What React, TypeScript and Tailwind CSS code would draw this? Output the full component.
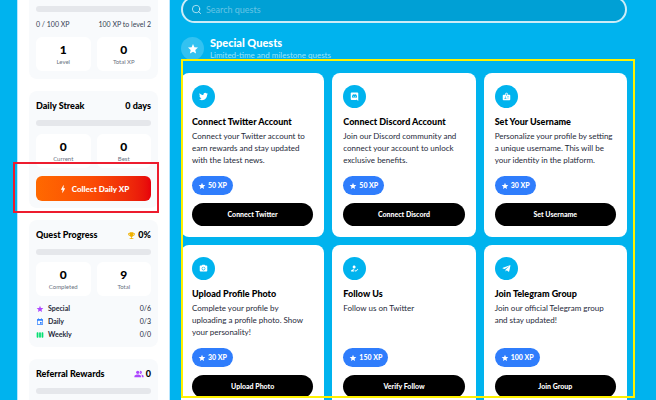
import type { ReactNode } from "react";
import { FaTelegramPlane, FaTwitter } from "react-icons/fa";
import {
  MdBadge,
  MdBolt,
  MdEmojiEvents,
  MdEvent,
  MdHowToReg,
  MdPeopleAlt,
  MdPhotoCamera,
  MdStar,
  MdViewWeek,
} from "react-icons/md";
import { Search } from "lucide-react";

function DiscordIcon() {
  return (
    <svg viewBox="0 0 24 24" width="1em" height="1em" fill="currentColor" aria-hidden="true">
      <path d="M22,24L16.75,19L17.38,21H4.5A2.5,2.5 0 0,1 2,18.5V3.5A2.5,2.5 0 0,1 4.5,1H19.5A2.5,2.5 0 0,1 22,3.5V24M12,6.8C9.32,6.8 7.44,7.95 7.44,7.95C8.47,7.03 10.27,6.5 10.27,6.5L10.1,6.33C8.41,6.36 6.88,7.53 6.88,7.53C5.16,11.12 5.27,14.22 5.27,14.22C6.67,16.03 8.75,15.9 8.75,15.9L9.46,15C8.21,14.73 7.42,13.62 7.42,13.62C7.42,13.62 9.3,14.9 12,14.9C14.7,14.9 16.58,13.62 16.58,13.62C16.58,13.62 15.79,14.73 14.54,15L15.25,15.9C15.25,15.9 17.33,16.03 18.73,14.22C18.73,14.22 18.84,11.12 17.12,7.53C17.12,7.53 15.59,6.36 13.9,6.33L13.73,6.5C13.73,6.5 15.53,7.03 16.56,7.95C16.56,7.95 14.68,6.8 12,6.8M9.93,10.59C10.58,10.59 11.11,11.16 11.1,11.86C11.1,12.55 10.58,13.13 9.93,13.13C9.29,13.13 8.77,12.55 8.77,11.86C8.77,11.16 9.28,10.59 9.93,10.59M14.1,10.59C14.75,10.59 15.27,11.16 15.27,11.86C15.27,12.55 14.75,13.13 14.1,13.13C13.46,13.13 12.94,12.55 12.94,11.86C12.94,11.16 13.45,10.59 14.1,10.59Z" />
    </svg>
  );
}

interface Quest {
  icon: ReactNode;
  title: string;
  description: string;
  xp: number;
  action: string;
}

const quests: Quest[] = [
  {
    icon: <FaTwitter />,
    title: "Connect Twitter Account",
    description: "Connect your Twitter account to earn rewards and stay updated with the latest news.",
    xp: 50,
    action: "Connect Twitter",
  },
  {
    icon: <DiscordIcon />,
    title: "Connect Discord Account",
    description: "Join our Discord community and connect your account to unlock exclusive benefits.",
    xp: 50,
    action: "Connect Discord",
  },
  {
    icon: <MdBadge />,
    title: "Set Your Username",
    description: "Personalize your profile by setting a unique username. This will be your identity in the platform.",
    xp: 30,
    action: "Set Username",
  },
  {
    icon: <MdPhotoCamera />,
    title: "Upload Profile Photo",
    description: "Complete your profile by uploading a profile photo. Show your personality!",
    xp: 30,
    action: "Upload Photo",
  },
  {
    icon: <MdHowToReg />,
    title: "Follow Us",
    description: "Follow us on Twitter",
    xp: 150,
    action: "Verify Follow",
  },
  {
    icon: <FaTelegramPlane />,
    title: "Join Telegram Group",
    description: "Join our official Telegram group and stay updated!",
    xp: 100,
    action: "Join Group",
  },
];

const categories = [
  { icon: <MdStar className="text-purple-500" />, name: "Special", count: "0/6" },
  { icon: <MdEvent className="text-blue-500" />, name: "Daily", count: "0/3" },
  { icon: <MdViewWeek className="text-green-400" />, name: "Weekly", count: "0/0" },
];

function QuestCard({ icon, title, description, xp, action }: Quest) {
  return (
    <article className="flex flex-col items-start rounded-lg bg-white px-[11px] pt-3 pb-[11px]">
      <div className="flex size-[23px] items-center justify-center rounded-full bg-[#00b3ee] text-[9px] text-white">
        {icon}
      </div>
      <h3 className="mt-2 text-[9px] leading-3 font-black whitespace-nowrap text-black">{title}</h3>
      <p className="mt-0.5 h-9 text-[8px] leading-3 text-gray-800">{description}</p>
      <div className="mt-2.5 flex h-[19px] items-center gap-0.5 rounded-full bg-[#2f7dfc] px-1.5 text-[7px] font-black text-white">
        <MdStar className="text-[8px]" />
        <span>{xp} XP</span>
      </div>
      <button
        type="button"
        className="mt-2 h-[23px] w-full rounded-full bg-black text-[7px] font-black text-white"
      >
        {action}
      </button>
    </article>
  );
}

function ProgressBar() {
  return <div className="h-1.5 rounded-full bg-gray-200" />;
}

function Stat({ value, label }: { value: number; label: string }) {
  return (
    <div className="flex h-[34px] flex-1 flex-col items-center rounded-md bg-white pt-[7px]">
      <div className="text-xs leading-3 font-black text-black">{value}</div>
      <div className="text-[6px] leading-3 text-gray-500">{label}</div>
    </div>
  );
}

function PanelTitle({ title, children }: { title: string; children: ReactNode }) {
  return (
    <div className="mb-2 flex h-3 items-center justify-between text-[9px] font-black whitespace-nowrap text-black">
      <h2>{title}</h2>
      <div className="flex items-center gap-0.5">{children}</div>
    </div>
  );
}

function Sidebar() {
  return (
    <aside className="flex w-[153px] shrink-0 flex-col gap-3 border-x border-sky-200 bg-white px-[11px]">
      <section className="rounded-b-lg bg-slate-50 px-[7px] pt-1.5 pb-2">
        <ProgressBar />
        <div className="mt-1.5 mb-[7px] flex h-3 items-center justify-between text-[7px] text-gray-700">
          <span>0 / 100 XP</span>
          <span>100 XP to level 2</span>
        </div>
        <div className="flex gap-1.5">
          <Stat value={1} label="Level" />
          <Stat value={0} label="Total XP" />
        </div>
      </section>

      <section className="relative rounded-lg bg-slate-50 px-[7px] pt-[9px] pb-[7px]">
        <PanelTitle title="Daily Streak">0 days</PanelTitle>
        <ProgressBar />
        <div className="mt-2 flex gap-1.5">
          <Stat value={0} label="Current" />
          <Stat value={0} label="Best" />
        </div>
        <button
          type="button"
          className="mt-2 flex h-[25px] w-full items-center justify-center gap-1 rounded-md bg-linear-to-r from-[#ff6900] via-[#fb4a05] to-[#e7000b] text-[8px] font-black text-white"
        >
          <MdBolt className="text-[10px]" />
          Collect Daily XP
        </button>
        <div className="pointer-events-none absolute -right-px -bottom-[5px] -left-4 h-[51px] border-2 border-[#ed1c2e]" />
      </section>

      <section className="rounded-lg bg-slate-50 px-[7px] pt-[9px] pb-1.5">
        <PanelTitle title="Quest Progress">
          <MdEmojiEvents className="text-[#f0b100]" />
          0%
        </PanelTitle>
        <ProgressBar />
        <div className="mt-[7px] flex gap-1.5">
          <Stat value={0} label="Completed" />
          <Stat value={9} label="Total" />
        </div>
        <ul className="mt-1.5 text-[7px] leading-[13px] text-gray-800">
          {categories.map((c) => (
            <li key={c.name} className="flex items-center gap-1">
              <span className="text-[8px]">{c.icon}</span>
              <span className="font-bold">{c.name}</span>
              <span className="ml-auto">{c.count}</span>
            </li>
          ))}
        </ul>
      </section>

      <section className="rounded-t-lg bg-slate-50 px-[7px] pt-[9px] pb-4">
        <PanelTitle title="Referral Rewards">
          <MdPeopleAlt className="text-[10px] text-purple-500" />0
        </PanelTitle>
        <ProgressBar />
      </section>
    </aside>
  );
}

export default function App() {
  return (
    <div className="flex h-screen items-start overflow-hidden bg-[#00b3ee] pr-[29px] pl-[17px] font-['Lato',sans-serif]">
      <Sidebar />
      <main className="-mt-1 min-w-0 flex-1 pl-[11px]">
        <label className="flex h-[27px] items-center gap-1 rounded-full border-2 border-white/80 bg-black/10 px-2 text-white/70">
          <Search className="size-[11px]" aria-hidden="true" />
          <input
            type="search"
            aria-label="Search quests"
            placeholder="Search quests"
            className="min-w-0 flex-1 bg-transparent text-[9px] text-white outline-none placeholder:text-white/40"
          />
        </label>

        <header className="mt-3.5 flex gap-1.5">
          <div className="flex size-[23px] items-center justify-center rounded-full bg-white/20 text-xs text-white">
            <MdStar />
          </div>
          <div>
            <h1 className="text-[11px] leading-3 font-black text-white">Special Quests</h1>
            <p className="text-[8px] leading-3 text-white/60">Limited-time and milestone quests</p>
          </div>
        </header>

        <div className="relative mt-3">
          <div className="grid grid-cols-3 gap-2">
            {quests.map((quest) => (
              <QuestCard key={quest.title} {...quest} />
            ))}
          </div>
          {/* highlight frame around the quest grid */}
          <div className="pointer-events-none absolute -top-3.5 -right-2 bottom-[11px] left-0 border-2 border-[#fff200]" />
        </div>
      </main>
    </div>
  );
}
